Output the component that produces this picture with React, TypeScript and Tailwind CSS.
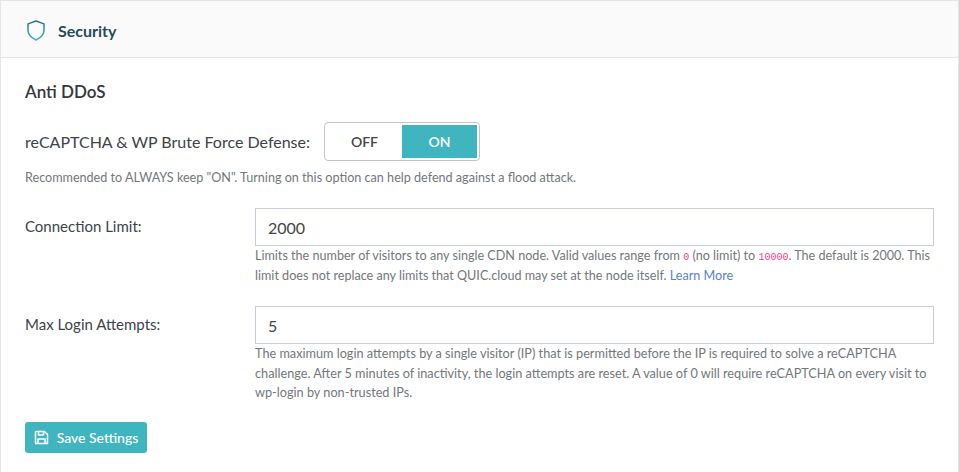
const lato = "[font-family:Lato,'Noto_Sans',sans-serif]";

const App = () => {
  return (
    <div className={`${lato} w-[959px] h-[472px] overflow-hidden bg-white border-l border-t border-r border-[#e5e5e5] text-[#3c434a]`}>
      {/* header */}
      <div className="h-[57px] pt-[4px] flex items-center pl-[25px] bg-[#fafafa] border-b border-[#e5e5e5]">
        <svg width="20" height="22" viewBox="0 0 20 22" fill="none" strokeWidth="1.5" strokeLinejoin="round">
          <defs>
            <linearGradient id="shield" x1="0" y1="0" x2="0" y2="1">
              <stop offset="0" stopColor="#2b6f8e" />
              <stop offset="1" stopColor="#3fb6bf" />
            </linearGradient>
          </defs>
          <path d="M10 1 L18 3.9 V10.5 C18 14.5 15 17.5 10 20 C5 17.5 2 14.5 2 10.5 V3.9 Z" stroke="url(#shield)" />
        </svg>
        <span className="ml-[12px] text-[16px] font-bold text-[#264a5e]">Security</span>
      </div>

      <div className="pl-[24px] pr-[24px]">
        <h3 className="mt-[24px] text-[17px] leading-[20px] font-semibold text-[#32373c]">Anti DDoS</h3>

        {/* toggle */}
        <div className="mt-[20px] flex items-center">
          <span className="text-[16px] text-[#3c434a]">reCAPTCHA &amp; WP Brute Force Defense:</span>
          <div className="ml-[14px] w-[156px] h-[39px] p-[2px] flex rounded-[4px] border border-[#c4c4c4] bg-white text-[14px] font-semibold">
            <div className="w-[75px] flex items-center justify-center text-[#444]">OFF</div>
            <div className="flex-1 flex items-center justify-center bg-[#3fb6bf] text-white">ON</div>
          </div>
        </div>
        <p className="mt-[7px] text-[12.6px] leading-[20px] text-[#72777c]">
          Recommended to ALWAYS keep "ON". Turning on this option can help defend against a flood attack.
        </p>

        {/* connection limit */}
        <div className="mt-[20px] flex">
          <label className="w-[230px] pt-[8px] text-[15px] leading-[20px]">Connection Limit:</label>
          <div className="flex-1">
            <input readOnly value="2000" className="block w-full h-[38px] px-[12px] border border-[#c8ccd4] bg-white text-[16px] text-[#444] outline-none" />
            <p className="text-[12.6px] leading-[19.5px] text-[#72777c]">
              Limits the number of visitors to any single CDN node. Valid values range from{" "}
              <code className="font-['Liberation_Mono',monospace] text-[10px] leading-none text-[#e83e8c]">0</code> (no limit) to{" "}
              <code className="font-['Liberation_Mono',monospace] text-[10px] leading-none text-[#e83e8c]">10000</code>. The default is 2000. This limit does not replace any limits that QUIC.cloud may set at the node itself.{" "}
              <a className="text-[#5a82c8]">Learn More</a>
            </p>
          </div>
        </div>

        {/* max login attempts */}
        <div className="mt-[21px] flex">
          <label className="w-[230px] pt-[8px] text-[15px] leading-[20px]">Max Login Attempts:</label>
          <div className="flex-1">
            <input readOnly value="5" className="block w-full h-[38px] px-[12px] border border-[#c8ccd4] bg-white text-[16px] text-[#444] outline-none" />
            <p className="text-[12.7px] leading-[19.5px] text-[#72777c]">
              The maximum login attempts by a single visitor (IP) that is permitted before the IP is required to solve a reCAPTCHA challenge. After 5 minutes of inactivity, the login attempts are reset. A value of 0 will require reCAPTCHA on every visit to wp-login by non-trusted IPs.
            </p>
          </div>
        </div>

        <button className="mt-[19px] w-[122px] h-[31px] flex items-center justify-center gap-[8px] rounded-[3px] bg-[#3fb6bf] text-white text-[14px] font-medium">
          <svg width="15" height="15" viewBox="0 0 15 15" fill="none" stroke="currentColor" strokeWidth="1.5" strokeLinejoin="round">
            <path d="M2 1.5 H10.5 L13.5 4.5 V13.5 H1.5 V2 Z" />
            <path d="M4.5 1.5 V5 H9.5 V1.5" />
            <path d="M4 13.5 V9 H11 V13.5" />
          </svg>
          Save Settings
        </button>
      </div>
    </div>
  );
};

export default App;
